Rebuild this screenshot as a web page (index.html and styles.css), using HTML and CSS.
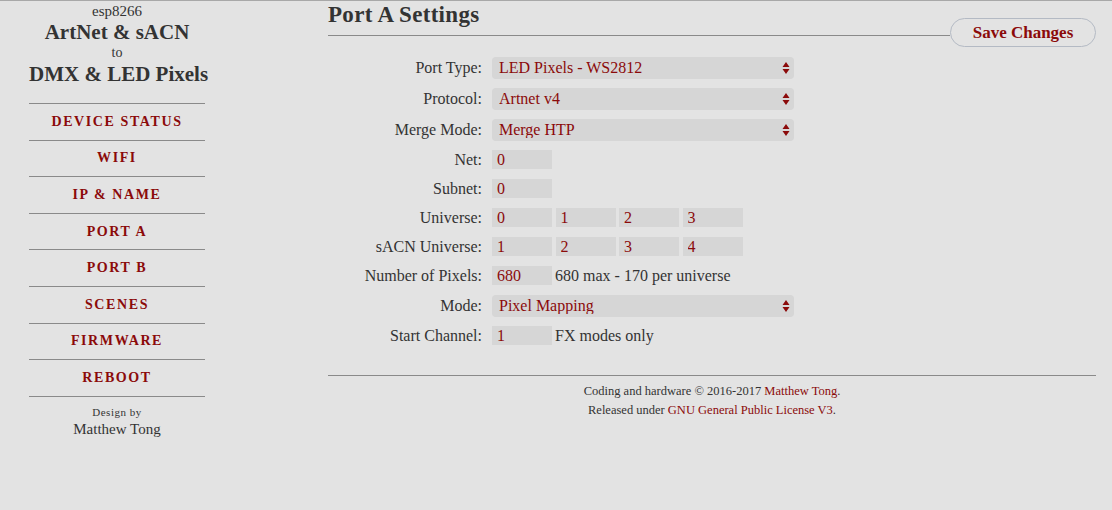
FILE: index.html
```html
<!DOCTYPE html>
<html lang="en">
<head>
    <meta charset="UTF-8">
    <title>ESP8266 ArtNet & sACN to DMX & LED Pixels</title>
    <link rel="stylesheet" href="styles.css">
</head>
<body>

    <div id="sidebar">
        <div class="brand">
            <div class="brand-small">esp8266</div>
            <div class="brand-big">ArtNet &amp; sACN</div>
            <div class="brand-to">to</div>
            <div class="brand-big">DMX &amp; LED Pixels</div>
        </div>
        <ul class="nav">
            <li><a href="#">Device Status</a></li>
            <li><a href="#">WiFi</a></li>
            <li><a href="#">IP &amp; Name</a></li>
            <li><a href="#">Port A</a></li>
            <li><a href="#">Port B</a></li>
            <li><a href="#">Scenes</a></li>
            <li><a href="#">Firmware</a></li>
            <li><a href="#">Reboot</a></li>
        </ul>
        <div class="credit">
            <div class="credit-small">Design by</div>
            <div class="credit-name">Matthew Tong</div>
        </div>
    </div>

    <div id="main">
        <div class="title-row">
            <h2>Port A Settings</h2>
            <button class="save">Save Changes</button>
        </div>

        <div class="form">
            <label class="sel-row">Port Type:</label>
            <div class="sel-row"><select><option>LED Pixels - WS2812</option></select></div>

            <label class="sel-row">Protocol:</label>
            <div class="sel-row"><select><option>Artnet v4</option></select></div>

            <label class="sel-row">Merge Mode:</label>
            <div class="sel-row"><select><option>Merge HTP</option></select></div>

            <label>Net:</label>
            <div><input type="text" value="0"></div>

            <label>Subnet:</label>
            <div><input type="text" value="0"></div>

            <label>Universe:</label>
            <div><input type="text" value="0"><input type="text" value="1"><input type="text" value="2"><input type="text" value="3"></div>

            <label>sACN Universe:</label>
            <div><input type="text" value="1"><input type="text" value="2"><input type="text" value="3"><input type="text" value="4"></div>

            <label>Number of Pixels:</label>
            <div><input type="text" value="680"><span class="note">680 max - 170 per universe</span></div>

            <label class="sel-row">Mode:</label>
            <div class="sel-row"><select><option>Pixel Mapping</option></select></div>

            <label>Start Channel:</label>
            <div><input type="text" value="1"><span class="note">FX modes only</span></div>
        </div>

        <div class="footer">
            <p>Coding and hardware &copy; 2016-2017 <a href="#">Matthew Tong</a>.</p>
            <p>Released under <a href="#">GNU General Public License V3</a>.</p>
        </div>
    </div>

</body>
</html>
```

FILE: styles.css
```css
/* General */
* {
    margin: 0;
    padding: 0;
    box-sizing: border-box;
}
html, body {
    font-family: 'Liberation Serif', serif;
    background: #e3e3e3;
    color: #333;
    width: 100%;
    height: 100%;
    overflow: hidden;
}
body {
    display: flex;
    border-top: 1px solid #a8a8a8;
}
a {
    color: #8b0a0a;
    text-decoration: none;
}
/* Sidebar */
#sidebar {
    width: 234px;
    text-align: center;
    padding: 0 29px;
}
.brand {
    padding-top: 1px;
    padding-bottom: 17px;
    border-bottom: 1px solid #8a8a8a;
    white-space: nowrap;
}
.brand-small {
    font-size: 15px;
    line-height: 18px;
}
.brand-big {
    font-size: 21px;
    font-weight: bold;
    line-height: 24px;
}
.brand-to {
    font-size: 14px;
    line-height: 18px;
}
.nav {
    list-style: none;
}
.nav li {
    border-bottom: 1px solid #8a8a8a;
    height: 36.6px;
    display: flex;
    align-items: center;
    justify-content: center;
}
.nav a {
    font-size: 14px;
    font-weight: bold;
    text-transform: uppercase;
    letter-spacing: 1.6px;
    color: #8b0a0a;
}
.credit {
    padding-top: 8px;
}
.credit-small {
    font-size: 11px;
    letter-spacing: 0.5px;
    line-height: 15px;
}
.credit-name {
    font-size: 15px;
    line-height: 19px;
}
/* Main */
#main {
    flex: 1;
    margin-left: 94px;
    margin-right: 16px;
}
.title-row {
    display: flex;
    align-items: flex-start;
    height: 35px;
}
.title-row h2 {
    flex: 1;
    font-size: 23px;
    letter-spacing: 0.3px;
    line-height: 28px;
    height: 35px;
    border-bottom: 1px solid #8a8a8a;
}
.save {
    margin-top: 17px;
    width: 146px;
    height: 29px;
    border: 1px solid #b4bac4;
    border-radius: 15px;
    background: #e3e3e3;
    color: #8b0a0a;
    font-family: 'Liberation Serif', serif;
    font-size: 17px;
    font-weight: bold;
    cursor: pointer;
}
/* Form */
.form {
    display: grid;
    grid-template-columns: 154px 1fr;
    column-gap: 10px;
    margin-top: 16px;
}
.form label, .form > div {
    height: 29px;
    display: flex;
    align-items: center;
    font-size: 16px;
}
.form label {
    justify-content: flex-end;
}
.form .sel-row {
    height: 31px;
}
select {
    appearance: none;
    -webkit-appearance: none;
    width: 302px;
    height: 22px;
    border: none;
    border-radius: 4px;
    background-color: #d6d6d6;
    background-image: url("data:image/svg+xml,%3Csvg xmlns='http://www.w3.org/2000/svg' width='8' height='14'%3E%3Cpath d='M4 1 L7.5 6 L0.5 6 Z M4 13 L7.5 8 L0.5 8 Z' fill='%238b0a0a'/%3E%3C/svg%3E");
    background-repeat: no-repeat;
    background-position: right 4px center;
    color: #8b0a0a;
    font-family: 'Liberation Serif', serif;
    font-size: 16px;
    padding-left: 7px;
    outline: none;
}
input {
    width: 60px;
    height: 19px;
    border: none;
    background: #d6d6d6;
    color: #8b0a0a;
    font-family: 'Liberation Serif', serif;
    font-size: 16px;
    padding-left: 5px;
    margin-right: 3.5px;
    outline: none;
}
.note {
    font-size: 16px;
    margin-left: -0.5px;
}
/* Footer */
.footer {
    margin-top: 25px;
    border-top: 1px solid #8a8a8a;
    padding-top: 6px;
    text-align: center;
    font-size: 12.5px;
    line-height: 19px;
}
```
